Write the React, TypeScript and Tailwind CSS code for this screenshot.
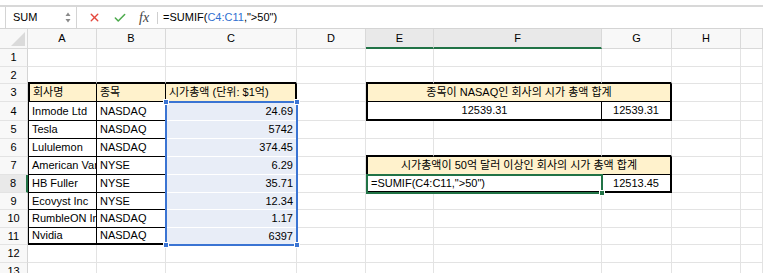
import { X, Check } from "lucide-react";

const GRID = "border-r border-b border-r-[#e3e3e3] border-b-[#e3e3e3]";
const HEAD = "border-r border-b border-r-[#d9d9d9] border-b-[#d9d9d9] bg-[#f8f8f8] text-[#666] justify-center";
const HEAD_ON = "border-r border-b-2 border-r-[#d9d9d9] border-b-[#217346] bg-[#e9e9e9] text-[#217346] justify-center";
const ROWH = "border-r border-b border-r-[#d4d4d4] border-b-[#e3e3e3] bg-[#f8f8f8] text-[#666] justify-center";
const ROWH_ON = "border-r-2 border-b border-r-[#217346] border-b-[#e3e3e3] bg-[#e9e9e9] text-[#217346] justify-center";
const TOP_THICK = "border-r border-b-2 border-r-[#e3e3e3] border-b-black";

function Cell({ children, className }: { children?: React.ReactNode; className: string }) {
  return (
    <div className={`flex items-center overflow-hidden whitespace-nowrap px-[3px] text-[11px] leading-none text-black ${className}`}>
      {children}
    </div>
  );
}

const companies = [
  { name: "Inmode Ltd", market: "NASDAQ", cap: "24.69" },
  { name: "Tesla", market: "NASDAQ", cap: "5742" },
  { name: "Lululemon", market: "NASDAQ", cap: "374.45" },
  { name: "American Vanguard", market: "NYSE", cap: "6.29" },
  { name: "HB Fuller", market: "NYSE", cap: "35.71" },
  { name: "Ecovyst Inc", market: "NYSE", cap: "12.34" },
  { name: "RumbleON Inc", market: "NASDAQ", cap: "1.17" },
  { name: "Nvidia", market: "NASDAQ", cap: "6397" },
];

const cols = ["A", "B", "C", "D", "E", "F", "G", "H", ""];

export default function App() {
  return (
    <div className="w-[763px] h-[273px] overflow-hidden bg-white font-['Liberation_Sans','Noto_Sans_CJK_KR',sans-serif]">
      {/* formula bar */}
      <div className="mt-[5px] h-[24px] border-t-2 border-b border-t-[#d8d8d8] border-b-[#d4d4d4] flex items-stretch">
        <div className="ml-[5px] w-[72px] border-l border-r border-l-[#d4d4d4] border-r-[#d4d4d4] flex items-center justify-between pl-[7px] pr-[5px]">
          <span className="text-[11px] text-black">SUM</span>
          <svg width="6" height="11" viewBox="0 0 6 11">
            <path d="M3 0.5 L5.5 4 L0.5 4 Z" fill="#8a8a8a" />
            <path d="M3 10.5 L5.5 7 L0.5 7 Z" fill="#8a8a8a" />
          </svg>
        </div>
        <div className="flex items-center pl-[11px] gap-[12px]">
          <X size={13} strokeWidth={2.6} color="#e4473d" />
          <Check size={14} strokeWidth={2.6} color="#4caa4c" />
          <span className="font-['Liberation_Serif',serif] italic text-[14px] text-[#444] leading-none">fx</span>
        </div>
        <div className="ml-[8px] my-auto h-[12px] border-l border-l-[#cfcfcf]" />
        <div className="flex items-center pl-[5px] text-[11px] text-black">
          =SUMIF(<span className="text-[#2f6fd0]">C4:C11</span>,"&gt;50")
        </div>
      </div>

      {/* sheet */}
      <div className="relative grid grid-cols-[28px_69px_69px_131px_69px_68px_168px_70px_69px_22px] grid-rows-[20px_18px_17px_18px_19px_18px_18px_18px_18px_17px_18px_17px_18px_18px]">
        {/* header row */}
        <div className="border-r border-b border-r-[#d9d9d9] border-b-[#d9d9d9] bg-[#f8f8f8] flex items-end justify-end p-[2px]">
          <svg width="14" height="14" viewBox="0 0 14 14">
            <path d="M14 0 L14 14 L0 14 Z" fill="#dadada" />
          </svg>
        </div>
        {cols.map((c) => (
          <Cell key={c || "i"} className={c === "E" || c === "F" ? HEAD_ON : HEAD}>
            {c}
          </Cell>
        ))}

        {/* row 1 */}
        <Cell className={ROWH}>1</Cell>
        {cols.map((c) => (
          <Cell key={"r1" + c} className={GRID} />
        ))}

        {/* row 2 */}
        <Cell className={ROWH}>2</Cell>
        <Cell className={TOP_THICK} />
        <Cell className={TOP_THICK} />
        <Cell className={TOP_THICK} />
        <Cell className={GRID} />
        <Cell className={TOP_THICK} />
        <Cell className={TOP_THICK} />
        <Cell className={TOP_THICK} />
        <Cell className={GRID} />
        <Cell className={GRID} />

        {/* row 3 */}
        <Cell className={ROWH}>3</Cell>
        <Cell className="border-l-2 border-r border-b border-l-black border-r-black border-b-black bg-[#fff2cc]">회사명</Cell>
        <Cell className="border-r border-b border-r-black border-b-black bg-[#fff2cc]">종목</Cell>
        <Cell className="border-r-2 border-b border-r-black border-b-black bg-[#fff2cc]">시가총액 (단위: $1억)</Cell>
        <Cell className={GRID} />
        <Cell className="col-span-3 border-l-2 border-r-2 border-b border-l-black border-r-black border-b-black bg-[#fff2cc] justify-center">
          종목이 NASAQ인 회사의 시가 총액 합계
        </Cell>
        <Cell className={GRID} />
        <Cell className={GRID} />

        {companies.map((co, i) => {
          const row = i + 4;
          const last = row === 11;
          return (
            <div key={co.name} className="contents">
              <Cell className={row === 8 ? ROWH_ON : ROWH}>{row}</Cell>
              <Cell
                className={
                  last
                    ? "border-l border-r border-b-2 border-l-black border-r-black border-b-black"
                    : "border-l border-r border-b border-l-black border-r-black border-b-black"
                }
              >
                {co.name}
              </Cell>
              <Cell
                className={
                  last
                    ? "border-r border-b-2 border-r-black border-b-black"
                    : "border-r border-b border-r-black border-b-black"
                }
              >
                {co.market}
              </Cell>
              <Cell className="border-r border-b border-r-[#e3e3e3] border-b-white bg-[#e8edf7] justify-end">
                {co.cap}
              </Cell>
              <Cell className={GRID} />
              {row === 4 && (
                <>
                  <Cell className="col-span-2 border-l-2 border-r border-b-2 border-l-black border-r-black border-b-black justify-center">
                    12539.31
                  </Cell>
                  <Cell className="border-r-2 border-b-2 border-r-black border-b-black justify-center">12539.31</Cell>
                </>
              )}
              {row === 5 && (
                <>
                  <Cell className={GRID} />
                  <Cell className={GRID} />
                  <Cell className={GRID} />
                </>
              )}
              {row === 6 && (
                <>
                  <Cell className={TOP_THICK} />
                  <Cell className={TOP_THICK} />
                  <Cell className={TOP_THICK} />
                </>
              )}
              {row === 7 && (
                <Cell className="col-span-3 border-l-2 border-r-2 border-b border-l-black border-r-black border-b-black bg-[#fff2cc] justify-center">
                  시가총액이 50억 달러 이상인 회사의 시가 총액 합계
                </Cell>
              )}
              {row === 8 && (
                <>
                  <Cell className="col-span-2 border-l-2 border-r border-b-2 border-l-black border-r-black border-b-black">
                    =SUMIF(C4:C11,"&gt;50")
                  </Cell>
                  <Cell className="border-r-2 border-b-2 border-r-black border-b-black justify-center">12513.45</Cell>
                </>
              )}
              {row > 8 && (
                <>
                  <Cell className={GRID} />
                  <Cell className={GRID} />
                  <Cell className={GRID} />
                </>
              )}
              <Cell className={GRID} />
              <Cell className={GRID} />
            </div>
          );
        })}

        {/* rows 12, 13 */}
        {[12, 13].map((r) => (
          <div key={r} className="contents">
            <Cell className={ROWH}>{r}</Cell>
            {cols.map((c) => (
              <Cell key={r + c} className={GRID} />
            ))}
          </div>
        ))}

        {/* selection C4:C11 */}
        <div className="absolute left-[165px] top-[72px] w-[133px] h-[145px] border-2 border-[#3a74d3] pointer-events-none">
          <div className="absolute -left-[4px] -top-[4px] w-[6px] h-[6px] bg-[#3a74d3] border border-white" />
          <div className="absolute -right-[4px] -top-[4px] w-[6px] h-[6px] bg-[#3a74d3] border border-white" />
          <div className="absolute -left-[4px] -bottom-[4px] w-[6px] h-[6px] bg-[#3a74d3] border border-white" />
          <div className="absolute -right-[4px] -bottom-[4px] w-[6px] h-[6px] bg-[#3a74d3] border border-white" />
        </div>

        {/* active cell E8:F8 */}
        <div className="absolute left-[366px] top-[145px] w-[237px] h-[20px] border-2 border-[#217346] pointer-events-none">
          <div className="absolute -right-[4px] -bottom-[4px] w-[6px] h-[6px] bg-[#217346] border border-white" />
        </div>
      </div>
    </div>
  );
}
